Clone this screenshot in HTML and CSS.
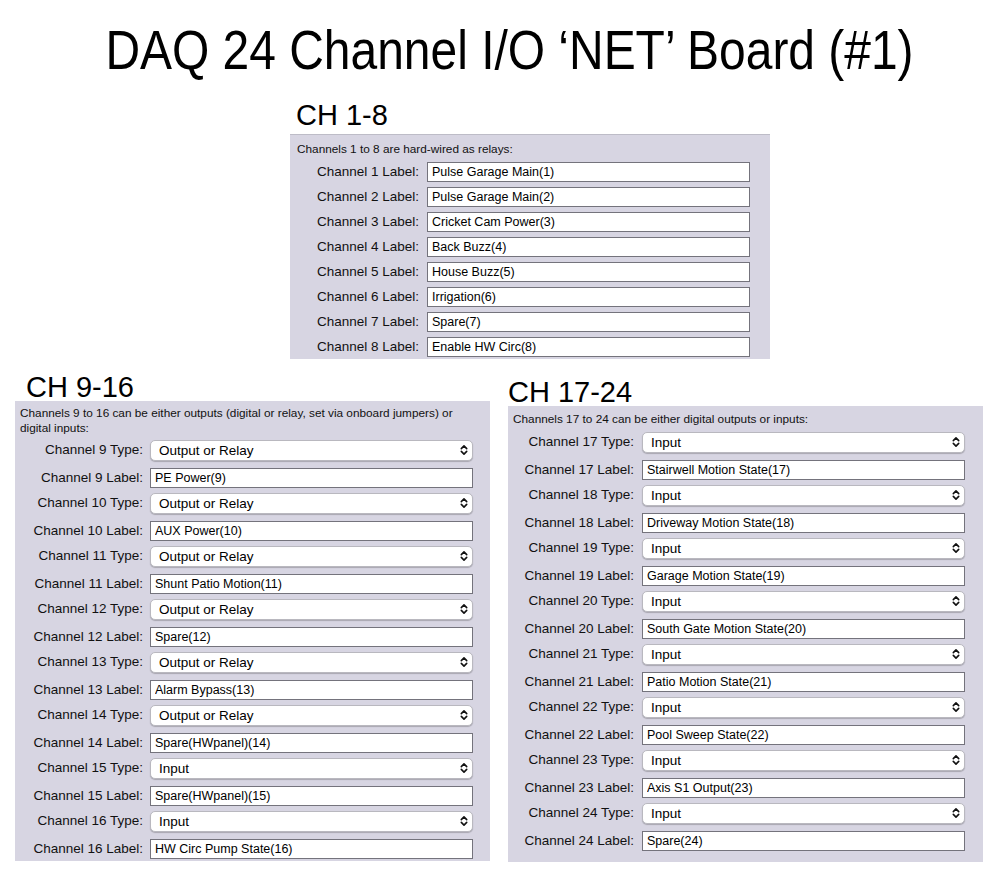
FILE: index.html
```html
<!DOCTYPE html>
<html lang="en">
<head>
<meta charset="utf-8">
<title>DAQ 24 Channel I/O 'NET' Board (#1)</title>
<link rel="stylesheet" href="styles.css">
</head>
<body>
<div class="title-wrap"><h1 class="title">DAQ 24 Channel I/O ‘NET’ Board (#1)</h1></div>

<section class="group g1">
  <h2 class="heading">CH 1-8</h2>
  <div class="panel p1">
    <p class="note">Channels 1 to 8 are hard-wired as relays:</p>
    <div class="row text"><label class="lbl">Channel 1 Label:</label><input class="txt" type="text" value="Pulse Garage Main(1)"></div>
    <div class="row text"><label class="lbl">Channel 2 Label:</label><input class="txt" type="text" value="Pulse Garage Main(2)"></div>
    <div class="row text"><label class="lbl">Channel 3 Label:</label><input class="txt" type="text" value="Cricket Cam Power(3)"></div>
    <div class="row text"><label class="lbl">Channel 4 Label:</label><input class="txt" type="text" value="Back Buzz(4)"></div>
    <div class="row text"><label class="lbl">Channel 5 Label:</label><input class="txt" type="text" value="House Buzz(5)"></div>
    <div class="row text"><label class="lbl">Channel 6 Label:</label><input class="txt" type="text" value="Irrigation(6)"></div>
    <div class="row text"><label class="lbl">Channel 7 Label:</label><input class="txt" type="text" value="Spare(7)"></div>
    <div class="row text"><label class="lbl">Channel 8 Label:</label><input class="txt" type="text" value="Enable HW Circ(8)"></div>
  </div>
</section>

<div class="lower">
  <section class="group g2">
    <h2 class="heading">CH 9-16</h2>
    <div class="panel p2">
      <p class="note">Channels 9 to 16 can be either outputs (digital or relay, set via onboard jumpers) or<br>digital inputs:</p>
      <div class="row type"><label class="lbl">Channel 9 Type:</label><div class="sel"><select><option>Output or Relay</option><option>Input</option></select><svg class="chev" viewBox="0 0 8 12" width="8" height="12"><path d="M1.3 4.6 L4 1.9 L6.7 4.6 M1.3 7.4 L4 10.1 L6.7 7.4"/></svg></div></div>
      <div class="row text"><label class="lbl">Channel 9 Label:</label><input class="txt" type="text" value="PE Power(9)"></div>
      <div class="row type"><label class="lbl">Channel 10 Type:</label><div class="sel"><select><option>Output or Relay</option><option>Input</option></select><svg class="chev" viewBox="0 0 8 12" width="8" height="12"><path d="M1.3 4.6 L4 1.9 L6.7 4.6 M1.3 7.4 L4 10.1 L6.7 7.4"/></svg></div></div>
      <div class="row text"><label class="lbl">Channel 10 Label:</label><input class="txt" type="text" value="AUX Power(10)"></div>
      <div class="row type"><label class="lbl">Channel 11 Type:</label><div class="sel"><select><option>Output or Relay</option><option>Input</option></select><svg class="chev" viewBox="0 0 8 12" width="8" height="12"><path d="M1.3 4.6 L4 1.9 L6.7 4.6 M1.3 7.4 L4 10.1 L6.7 7.4"/></svg></div></div>
      <div class="row text"><label class="lbl">Channel 11 Label:</label><input class="txt" type="text" value="Shunt Patio Motion(11)"></div>
      <div class="row type"><label class="lbl">Channel 12 Type:</label><div class="sel"><select><option>Output or Relay</option><option>Input</option></select><svg class="chev" viewBox="0 0 8 12" width="8" height="12"><path d="M1.3 4.6 L4 1.9 L6.7 4.6 M1.3 7.4 L4 10.1 L6.7 7.4"/></svg></div></div>
      <div class="row text"><label class="lbl">Channel 12 Label:</label><input class="txt" type="text" value="Spare(12)"></div>
      <div class="row type"><label class="lbl">Channel 13 Type:</label><div class="sel"><select><option>Output or Relay</option><option>Input</option></select><svg class="chev" viewBox="0 0 8 12" width="8" height="12"><path d="M1.3 4.6 L4 1.9 L6.7 4.6 M1.3 7.4 L4 10.1 L6.7 7.4"/></svg></div></div>
      <div class="row text"><label class="lbl">Channel 13 Label:</label><input class="txt" type="text" value="Alarm Bypass(13)"></div>
      <div class="row type"><label class="lbl">Channel 14 Type:</label><div class="sel"><select><option>Output or Relay</option><option>Input</option></select><svg class="chev" viewBox="0 0 8 12" width="8" height="12"><path d="M1.3 4.6 L4 1.9 L6.7 4.6 M1.3 7.4 L4 10.1 L6.7 7.4"/></svg></div></div>
      <div class="row text"><label class="lbl">Channel 14 Label:</label><input class="txt" type="text" value="Spare(HWpanel)(14)"></div>
      <div class="row type"><label class="lbl">Channel 15 Type:</label><div class="sel"><select><option>Input</option><option>Output or Relay</option></select><svg class="chev" viewBox="0 0 8 12" width="8" height="12"><path d="M1.3 4.6 L4 1.9 L6.7 4.6 M1.3 7.4 L4 10.1 L6.7 7.4"/></svg></div></div>
      <div class="row text"><label class="lbl">Channel 15 Label:</label><input class="txt" type="text" value="Spare(HWpanel)(15)"></div>
      <div class="row type"><label class="lbl">Channel 16 Type:</label><div class="sel"><select><option>Input</option><option>Output or Relay</option></select><svg class="chev" viewBox="0 0 8 12" width="8" height="12"><path d="M1.3 4.6 L4 1.9 L6.7 4.6 M1.3 7.4 L4 10.1 L6.7 7.4"/></svg></div></div>
      <div class="row text"><label class="lbl">Channel 16 Label:</label><input class="txt" type="text" value="HW Circ Pump State(16)"></div>
    </div>
  </section>

  <section class="group g3">
    <h2 class="heading">CH 17-24</h2>
    <div class="panel p3">
      <p class="note">Channels 17 to 24 can be either digital outputs or inputs:</p>
      <div class="row type"><label class="lbl">Channel 17 Type:</label><div class="sel"><select><option>Input</option><option>Output</option></select><svg class="chev" viewBox="0 0 8 12" width="8" height="12"><path d="M1.3 4.6 L4 1.9 L6.7 4.6 M1.3 7.4 L4 10.1 L6.7 7.4"/></svg></div></div>
      <div class="row text"><label class="lbl">Channel 17 Label:</label><input class="txt" type="text" value="Stairwell Motion State(17)"></div>
      <div class="row type"><label class="lbl">Channel 18 Type:</label><div class="sel"><select><option>Input</option><option>Output</option></select><svg class="chev" viewBox="0 0 8 12" width="8" height="12"><path d="M1.3 4.6 L4 1.9 L6.7 4.6 M1.3 7.4 L4 10.1 L6.7 7.4"/></svg></div></div>
      <div class="row text"><label class="lbl">Channel 18 Label:</label><input class="txt" type="text" value="Driveway Motion State(18)"></div>
      <div class="row type"><label class="lbl">Channel 19 Type:</label><div class="sel"><select><option>Input</option><option>Output</option></select><svg class="chev" viewBox="0 0 8 12" width="8" height="12"><path d="M1.3 4.6 L4 1.9 L6.7 4.6 M1.3 7.4 L4 10.1 L6.7 7.4"/></svg></div></div>
      <div class="row text"><label class="lbl">Channel 19 Label:</label><input class="txt" type="text" value="Garage Motion State(19)"></div>
      <div class="row type"><label class="lbl">Channel 20 Type:</label><div class="sel"><select><option>Input</option><option>Output</option></select><svg class="chev" viewBox="0 0 8 12" width="8" height="12"><path d="M1.3 4.6 L4 1.9 L6.7 4.6 M1.3 7.4 L4 10.1 L6.7 7.4"/></svg></div></div>
      <div class="row text"><label class="lbl">Channel 20 Label:</label><input class="txt" type="text" value="South Gate Motion State(20)"></div>
      <div class="row type"><label class="lbl">Channel 21 Type:</label><div class="sel"><select><option>Input</option><option>Output</option></select><svg class="chev" viewBox="0 0 8 12" width="8" height="12"><path d="M1.3 4.6 L4 1.9 L6.7 4.6 M1.3 7.4 L4 10.1 L6.7 7.4"/></svg></div></div>
      <div class="row text"><label class="lbl">Channel 21 Label:</label><input class="txt" type="text" value="Patio Motion State(21)"></div>
      <div class="row type"><label class="lbl">Channel 22 Type:</label><div class="sel"><select><option>Input</option><option>Output</option></select><svg class="chev" viewBox="0 0 8 12" width="8" height="12"><path d="M1.3 4.6 L4 1.9 L6.7 4.6 M1.3 7.4 L4 10.1 L6.7 7.4"/></svg></div></div>
      <div class="row text"><label class="lbl">Channel 22 Label:</label><input class="txt" type="text" value="Pool Sweep State(22)"></div>
      <div class="row type"><label class="lbl">Channel 23 Type:</label><div class="sel"><select><option>Input</option><option>Output</option></select><svg class="chev" viewBox="0 0 8 12" width="8" height="12"><path d="M1.3 4.6 L4 1.9 L6.7 4.6 M1.3 7.4 L4 10.1 L6.7 7.4"/></svg></div></div>
      <div class="row text"><label class="lbl">Channel 23 Label:</label><input class="txt" type="text" value="Axis S1 Output(23)"></div>
      <div class="row type"><label class="lbl">Channel 24 Type:</label><div class="sel"><select><option>Input</option><option>Output</option></select><svg class="chev" viewBox="0 0 8 12" width="8" height="12"><path d="M1.3 4.6 L4 1.9 L6.7 4.6 M1.3 7.4 L4 10.1 L6.7 7.4"/></svg></div></div>
      <div class="row text"><label class="lbl">Channel 24 Label:</label><input class="txt" type="text" value="Spare(24)"></div>
    </div>
  </section>
</div>
</body>
</html>
```
FILE: styles.css
```css
html, body {
  margin: 0;
  padding: 0;
  background: #ffffff;
  font-family: "Liberation Sans", Arial, sans-serif;
  color: #000;
}

.title-wrap {
  padding: 18px 0 0 20px;
}

.title {
  display: block;
  height: 64px;
  margin: 0;
  font-size: 56px;
  line-height: 64px;
  font-weight: normal;
  text-align: center;
  white-space: nowrap;
  transform: scaleX(0.856);
  transform-origin: center;
}

.group {
  box-sizing: border-box;
}

.heading {
  margin: 0;
  height: 28px;
  font-size: 29px;
  line-height: 28px;
  font-weight: normal;
  white-space: nowrap;
}

.g1 {
  width: 480px;
  margin: 18px 0 0 290px;
}
.g1 .heading {
  padding-left: 6px;
  height: 30px;
  line-height: 30px;
  margin-bottom: 4px;
}

.lower {
  display: flex;
  align-items: flex-start;
  gap: 18px;
  padding-left: 15px;
  margin-top: 14px;
}

.g2, .g3 {
  width: 475px;
}
.g2 .heading {
  padding-left: 11px;
}
.g3 {
  margin-top: 5px;
}
.g3 .heading {
  padding-left: 0;
}

.panel {
  background: #d7d5e2;
  box-sizing: border-box;
}
.p1 {
  border-top: 1px solid #bdbcc7;
  padding-bottom: 2px;
}
.p2 {
  padding-bottom: 2px;
}
.p3 {
  padding-bottom: 11px;
}

.note {
  margin: 0;
  font-size: 11.8px;
  line-height: 15px;
  color: #111;
}
.p1 .note { padding: 7px 0 0 7px; margin-bottom: 5px; }
.p2 .note { padding: 5px 0 0 5px; margin-bottom: 3px; }
.p3 .note { padding: 6px 0 0 5px; margin-bottom: 4px; }

.row {
  display: flex;
  align-items: center;
}
.row.text {
  height: 20px;
  margin-bottom: 4px;
}
.p1 .row.text {
  margin-bottom: 5px;
}
.row.type {
  height: 22px;
  margin-bottom: 7px;
}
.panel .row.text:last-child,
.panel .row.type:last-child {
  margin-bottom: 0;
}

.lbl {
  flex: none;
  text-align: right;
  white-space: nowrap;
  font-size: 13.5px;
  line-height: 16px;
  color: #111;
}
.p1 .lbl { width: 129px; margin-right: 8px; }
.p2 .lbl { width: 128px; margin-right: 7px; }
.p3 .lbl { width: 126px; margin-right: 8px; }

.txt {
  box-sizing: border-box;
  width: 323px;
  height: 20px;
  margin: 0;
  padding: 0 0 0 4px;
  border: 1px solid #74737c;
  border-radius: 0;
  background: #fff;
  font-family: "Liberation Sans", Arial, sans-serif;
  font-size: 12.5px;
  color: #000;
  outline: none;
}

.sel {
  position: relative;
  width: 323px;
  height: 21px;
}
.sel select {
  -webkit-appearance: none;
  appearance: none;
  box-sizing: border-box;
  width: 100%;
  height: 21px;
  margin: 0;
  padding: 0 0 0 8px;
  border: 1px solid #b9b8bf;
  border-radius: 5px;
  background: #fff;
  box-shadow: 0 1px 1px rgba(0, 0, 0, 0.22);
  font-family: "Liberation Sans", Arial, sans-serif;
  font-size: 13.5px;
  color: #000;
  outline: none;
}
.chev {
  position: absolute;
  right: 5px;
  top: 4px;
  pointer-events: none;
}
.chev path {
  fill: none;
  stroke: #111;
  stroke-width: 1.6;
  stroke-linecap: round;
  stroke-linejoin: round;
}
```
